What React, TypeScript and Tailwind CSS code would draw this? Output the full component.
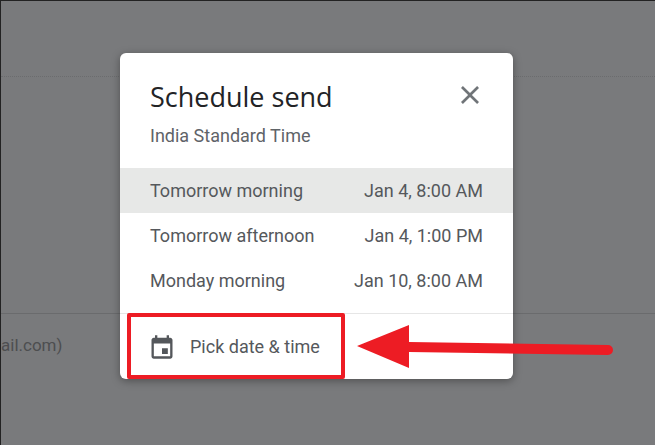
import React from "react";

const rows = [
  { label: "Tomorrow morning", date: "Jan 4, 8:00 AM", active: true },
  { label: "Tomorrow afternoon", date: "Jan 4, 1:00 PM", active: false },
  { label: "Monday morning", date: "Jan 10, 8:00 AM", active: false },
];

export default function App() {
  return (
    <div className="relative w-[655px] h-[445px] overflow-hidden bg-[#797a7c] border-l border-t border-[#222] font-['Roboto',sans-serif]">
      <div className="h-[76px] border-b border-dotted border-[#6b6c6e]" />
      <div className="h-[237px] border-b border-[#6a6b6d]" />
      <div className="pt-[18px] text-[17px] leading-[26px] text-[#4d4e50]">ail.com)</div>

      <div className="absolute left-[119px] top-[52px] w-[393px] h-[326px] rounded-[6px] bg-white shadow-[0_2px_8px_rgba(0,0,0,0.35)] flex flex-col overflow-hidden">
        <div className="h-[115px] pl-[30px] pr-[31px] flex flex-col shrink-0">
          <div className="flex items-center justify-between pt-[25px]">
            <span className="text-[27px] leading-[38px] text-[#222326] font-['Open_Sans',sans-serif]">Schedule send</span>
            <svg width="24" height="24" viewBox="0 0 24 24" fill="#707478" className="-mt-[4px]">
              <path d="M21 4.900 19.100 3 12 10.100 4.900 3 3 4.900 10.100 12 3 19.100 4.900 21 12 13.900 19.100 21 21 19.100 13.900 12z" />
            </svg>
          </div>
          <div className="pt-[8px] text-[18px] leading-[24px] text-[#5f6368]">India Standard Time</div>
        </div>
        <div className="flex flex-col">
          {rows.map((r) => (
            <div key={r.label} className={`h-[45px] px-[30px] flex items-center justify-between text-[#55585c] text-[18px] ${r.active ? "bg-[#e7e8e7]" : ""}`}>
              <span>{r.label}</span>
              <span>{r.date}</span>
            </div>
          ))}
        </div>
        <div className="mt-[10px] flex-1 border-t border-[#e6e6e6] pl-[28px] flex items-center gap-[14px] text-[#55585c] text-[18px]">
          <svg width="28" height="28" viewBox="0 0 24 24" fill="#54575b">
            <path d="M19 4h-1V2h-2v2H8V2H6v2H5C3.900 4 3 4.900 3 6v14c0 1.100.9 2 2 2h14c1.100 0 2-.9 2-2V6c0-1.100-.9-2-2-2zm0 16H5V9h14v11zM12 13h5v5h-5z" />
          </svg>
          <span>Pick date &amp; time</span>
        </div>
      </div>

      <div className="absolute left-[126px] top-[312px] w-[218px] h-[66px] border-[4px] border-[#ed1c24] rounded-[2px]" />

      <svg className="absolute left-[350px] top-[320px]" width="270" height="60" viewBox="0 0 270 60">
        <path d="M6 25 L58 4 L58 21 L257 24 A5 5 0 0 1 257 34 L58 31 L58 47 Z" fill="#ed1c24" />
      </svg>
    </div>
  );
}
